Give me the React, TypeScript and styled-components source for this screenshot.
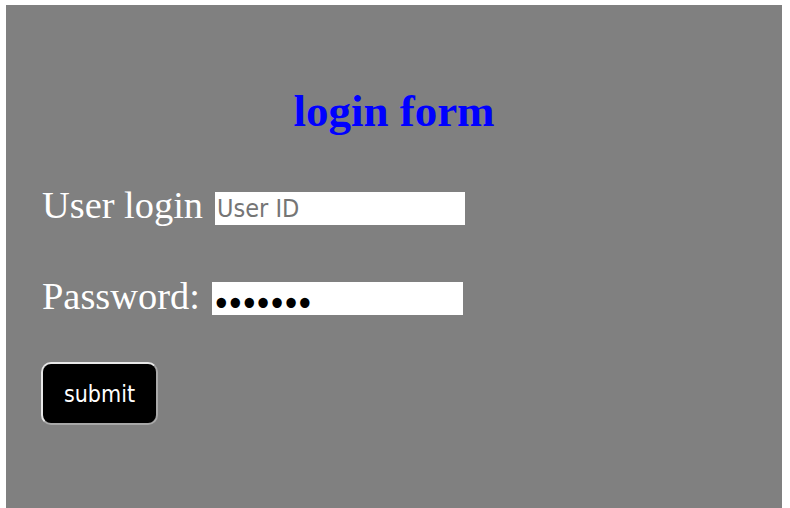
import styled, { createGlobalStyle } from "styled-components";

const GlobalStyle = createGlobalStyle`
  html, body {
    margin: 0;
    padding: 0;
    background: #ffffff;
  }
  body {
    font-family: "Liberation Serif", "Times New Roman", serif;
  }
`;

const Panel = styled.div`
  margin: 5px 8px 0 6px;
  width: 776px;
  min-height: 520px;
  box-sizing: border-box;
  background-color: #808080;
  padding: 84px 0 0 36px;
`;

const Title = styled.h1`
  margin: 0 0 0 -36px;
  font-size: 45px;
  line-height: 45px;
  font-weight: bold;
  color: #0000ff;
  text-align: center;
`;

const LoginForm = styled.form`
  display: flex;
  flex-direction: column;
  align-items: flex-start;
`;

const Row = styled.div<{ $top: number }>`
  display: flex;
  align-items: flex-start;
  gap: 12px;
  margin-top: ${(p) => p.$top}px;
  font-size: 38.4px;
  line-height: 38px;
  color: #ffffff;
`;

const Label = styled.label`
  white-space: nowrap;
  padding-top: 1px;
`;

const Field = styled.input<{ $drop: number }>`
  width: 250px;
  height: 33px;
  box-sizing: border-box;
  border: none;
  outline: none;
  padding: 0 2px;
  margin: ${(p) => p.$drop}px 0 0 0;
  background: #ffffff;
  color: #000000;
  font-family: "DejaVu Sans Condensed", "DejaVu Sans", sans-serif;
  font-size: 25px;

  &::placeholder {
    color: #757575;
  }

  &[type="password"] {
    font-size: 36px;
    letter-spacing: -5.2px;
    padding: 10px 0 0 0;
    width: 251px;
  }
`;

const SubmitButton = styled.button`
  margin: 47px 0 0 -1px;
  width: 117px;
  height: 63px;
  box-sizing: border-box;
  border: 2px solid;
  border-color: #e8e8e8 #a8a8a8 #a8a8a8 #e8e8e8;
  border-radius: 10px;
  background: #000000;
  color: #ffffff;
  font-family: "DejaVu Sans Condensed", "DejaVu Sans", sans-serif;
  font-size: 23px;
  padding: 0;
  cursor: pointer;
`;

export default function App() {
  return (
    <>
      <GlobalStyle />
      <Panel>
        <Title>login form</Title>
        <LoginForm onSubmit={(e) => e.preventDefault()}>
          <Row $top={51}>
            <Label htmlFor="uid">User login</Label>
            <Field id="uid" type="text" placeholder="User ID" $drop={7} />
          </Row>
          <Row $top={51}>
            <Label htmlFor="pwd">Password:</Label>
            <Field id="pwd" type="password" defaultValue="1234567" $drop={6} />
          </Row>
          <SubmitButton type="submit">submit</SubmitButton>
        </LoginForm>
      </Panel>
    </>
  );
}
